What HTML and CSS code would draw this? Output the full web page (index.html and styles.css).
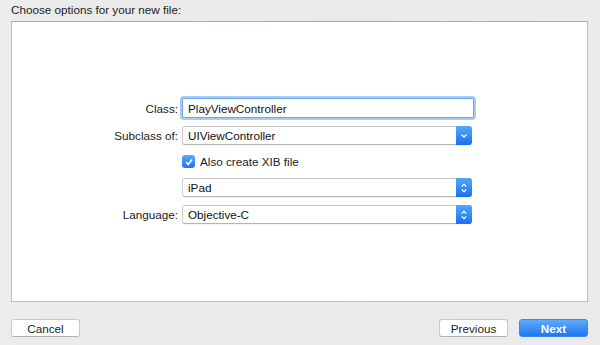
FILE: index.html
```html
<!DOCTYPE html>
<html lang="en">
<head>
  <meta charset="UTF-8" />
  <title>Choose options for your new file</title>
  <link rel="stylesheet" href="styles.css">
</head>
<body>
  <div class="title">Choose options for your new file:</div>

  <div class="panel">
    <div class="form">
      <label class="label" for="className">Class:</label>
      <input class="field" type="text" id="className" value="PlayViewController">

      <span class="label">Subclass of:</span>
      <div class="combo">
        <span>UIViewController</span>
        <span class="combo-btn">
          <svg width="8" height="6" viewBox="0 0 8 6"><path d="M1.5 1.5 L4 4 L6.5 1.5" fill="none" stroke="#fff" stroke-width="1.3"/></svg>
        </span>
      </div>

      <span class="label"></span>
      <div class="check-row">
        <span class="check">
          <svg width="10" height="10" viewBox="0 0 10 10"><path d="M2 5.2 L4.2 7.5 L8 2.5" fill="none" stroke="#fff" stroke-width="1.5"/></svg>
        </span>
        <span>Also create XIB file</span>
      </div>

      <span class="label"></span>
      <div class="popup">
        <span>iPad</span>
        <span class="popup-btn">
          <svg width="8" height="12" viewBox="0 0 8 12"><path d="M1.8 4.5 L4 2.3 L6.2 4.5 M1.8 7.5 L4 9.7 L6.2 7.5" fill="none" stroke="#fff" stroke-width="1.2"/></svg>
        </span>
      </div>

      <span class="label">Language:</span>
      <div class="popup">
        <span>Objective-C</span>
        <span class="popup-btn">
          <svg width="8" height="12" viewBox="0 0 8 12"><path d="M1.8 4.5 L4 2.3 L6.2 4.5 M1.8 7.5 L4 9.7 L6.2 7.5" fill="none" stroke="#fff" stroke-width="1.2"/></svg>
        </span>
      </div>
    </div>
  </div>

  <div class="footer">
    <button class="btn">Cancel</button>
    <div class="footer-right">
      <button class="btn">Previous</button>
      <button class="btn btn-primary">Next</button>
    </div>
  </div>
</body>
</html>
```

FILE: styles.css
```css
body {
  margin: 0;
  width: 600px;
  height: 345px;
  overflow: hidden;
  font-family: "Liberation Sans", Arial, sans-serif;
  font-size: 11.7px;
  color: #222;
  background: linear-gradient(90deg, #ececec 0%, #ebe9e9 45%, #e9ebed 100%);
}

.title {
  padding: 3px 0 0 11px;
  height: 18px;
  line-height: 14px;
}

.panel {
  margin: 0 12px 0 11px;
  height: 279px;
  background: #fff;
  border: 1px solid #bdbdbd;
  border-top-color: #aaa;
}

.form {
  display: grid;
  grid-template-columns: 166px 292px;
  column-gap: 4px;
  row-gap: 8px;
  padding-top: 76px;
  align-items: center;
}

.label {
  text-align: right;
  color: #222;
}

.field {
  box-sizing: border-box;
  height: 20px;
  width: 292px;
  margin: 0;
  padding: 0 5px;
  font: inherit;
  color: #111;
  border: 1px solid #6ea6ee;
  border-radius: 2px;
  box-shadow: 0 0 0 2px #a9cbf6;
  outline: none;
}

.combo, .popup {
  box-sizing: border-box;
  height: 19px;
  width: 290px;
  display: flex;
  align-items: center;
  justify-content: space-between;
  padding-left: 5px;
  color: #111;
  border: 1px solid #d0d0d0;
  border-top-color: #c6c6c6;
  border-bottom-color: #b4b4b4;
  border-radius: 3px;
  background: #fff;
  box-shadow: 0 1px 0 rgba(0, 0, 0, 0.04);
}

.combo-btn, .popup-btn {
  width: 16px;
  height: 19px;
  margin-right: -1px;
  display: flex;
  align-items: center;
  justify-content: center;
  border-radius: 0 3px 3px 0;
  background: linear-gradient(#52a8fb, #1b6ff0);
}

.check-row {
  display: flex;
  align-items: center;
  gap: 5px;
  height: 15px;
  margin-top: 1px;
  margin-bottom: 1px;
}

.check {
  width: 13px;
  height: 13px;
  border-radius: 3px;
  display: flex;
  align-items: center;
  justify-content: center;
  background: linear-gradient(#5aacfc, #1f74f0);
}

.footer {
  display: flex;
  justify-content: space-between;
  padding: 17px 12px 0 11px;
}

.footer-right {
  display: flex;
  gap: 11px;
}

.btn {
  box-sizing: border-box;
  width: 69px;
  height: 18px;
  margin: 0;
  padding: 0;
  font: inherit;
  color: #222;
  background: #fff;
  border: 1px solid #c8c8c8;
  border-bottom-color: #b0b0b0;
  border-radius: 3px;
}

.btn-primary {
  color: #fff;
  font-weight: bold;
  border: 1px solid #3d86ee;
  background: linear-gradient(#5eacfb, #2177f2);
}
```
